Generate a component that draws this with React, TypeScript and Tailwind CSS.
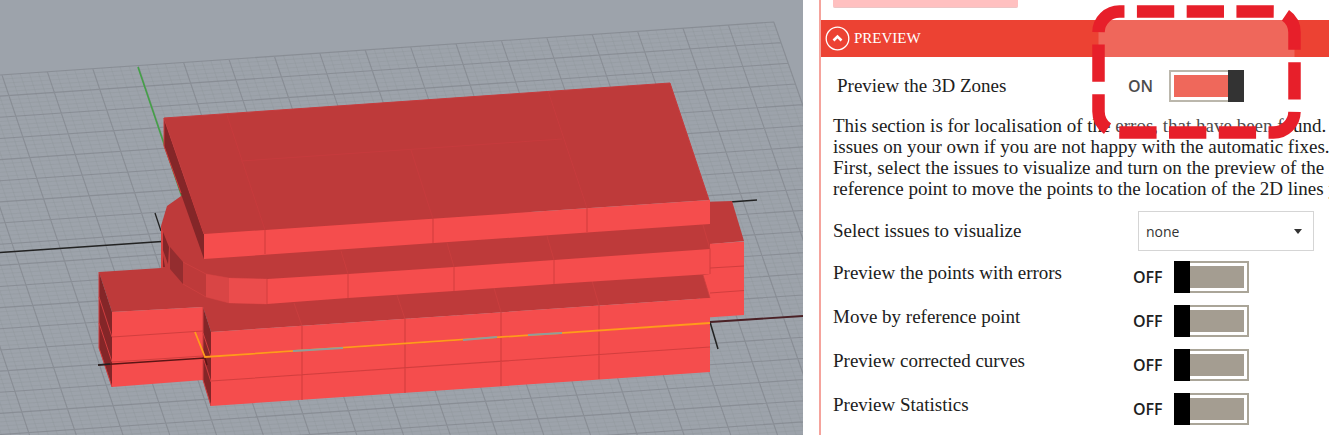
import { useState } from "react";

const ROWS = 22;
const STEPS = 5;

const ISSUES = ["none", "duplicates", "gaps", "overlaps"];

const SWITCHES = [
  { id: "points", label: "Preview the points with errors" },
  { id: "move", label: "Move by reference point" },
  { id: "curves", label: "Preview corrected curves" },
  { id: "statistics", label: "Preview Statistics" },
];

// construction plane, u runs along the back edge and v towards the viewer
function GridLines() {
  const major: string[] = [];
  const minor: string[] = [];

  for (let i = -8 * STEPS; i <= 17 * STEPS; i++) {
    const u = i / STEPS;
    const x1 = 2 + u * 45.4;
    const y1 = 75 - u * 3.12;
    const x2 = 123 + u * 46.75;
    const line = `M${x1} ${y1}L${x2} 435`;
    (i % STEPS === 0 ? major : minor).push(line);
  }

  for (let j = 0; j <= ROWS * STEPS; j++) {
    const y = 75 + (j / STEPS) * 21.15;
    const end = 774 + (j / STEPS) * 7.2;
    const line = `M0 ${y}L${end} ${y - end * 0.0685}`;
    (j % STEPS === 0 ? major : minor).push(line);
  }

  return (
    <g fill="none">
      <path d={minor.join("")} stroke="#8b9097" strokeWidth="0.8" opacity="0.35" />
      <path d={major.join("")} stroke="#80848b" strokeWidth="1.1" opacity="0.7" />
    </g>
  );
}

function Viewport() {
  return (
    <svg
      viewBox="0 0 803 435"
      preserveAspectRatio="xMinYMin slice"
      className="block h-full w-full"
      role="img"
      aria-label="3D zones"
    >
      <rect width="803" height="435" fill="#9da3ab" />
      <GridLines />

      <path d="M138 67L182 197" stroke="#44a047" strokeWidth="1.6" />
      <path d="M0 252.500L162 241.500M155 213L161 231M730 202L757 200" stroke="#222" strokeWidth="1.3" />

      {/* right wing */}
      <path d="M700 202L732 201L744 241L700 245Z" fill="#be3a3a" />
      <path d="M700 244.500L744 241.500V315L700 318Z" fill="#f54d4d" />
      <path d="M710 268L744 266M710 293L744 290.500" stroke="#d23e3e" />

      {/* roofs of the lower floors */}
      <path
        d="M99 272L161 268V226L167 206L184 194L710 222V298L211 332L203 307L112 312Z"
        fill="#be3a3a"
      />
      <path d="M703 275L710 274V298Z" fill="#f54d4d" />
      <path d="M161 226L163 232V268H161Z" fill="#d84040" />
      <path d="M163 232L169 247L168 264L163 250ZM163 256L165 267L163 267Z" fill="#842628" />
      <path d="M170 247L183 262V284L170 269Z" fill="#942d2f" />
      <path d="M183 262L206 274L229 278L267 279M183 284L206 297L229 303L267 304" stroke="#cb3f3f" fill="none" />

      {/* left wing */}
      <path d="M99 272L112 312V387L99 348Z" fill="#842628" />
      <path d="M112 312L203 307V380L112 387Z" fill="#f54d4d" />
      <path d="M99 272V348L112 387M99 297L112 337M99 323L112 362" stroke="#cf3d3f" fill="none" />
      <path d="M112 337L203 331M112 362L203 356" stroke="#d23e3e" />

      {/* front block */}
      <path d="M203 307L211 332V406L203 380Z" fill="#842628" />
      <path d="M203 307V380L211 406M203 333L211 357M203 357L211 382" stroke="#cf3d3f" fill="none" />
      <path d="M211 332L710 298V372L211 406Z" fill="#f54d4d" />
      <path
        d="M211 357L710 323M211 381L710 347M302 326V400M405 319V393M501 312V386M599 305V379"
        stroke="#d23e3e"
        strokeWidth="1.1"
      />
      <path d="M294 303L302 326M397 295L405 319M494 288L501 312M592 281L599 305M703 275L710 298" stroke="#cb3f3f" strokeWidth="0.8" />

      {/* middle floor */}
      <path d="M206 274L229 278V303L206 297Z" fill="#d94545" />
      <path d="M229 278L267 279V304L229 303Z" fill="#eb4c4c" />
      <path d="M267 279L348 274L454 267L554 260L710 249V274L554 284L454 291L348 298L267 304Z" fill="#f54d4d" />
      <path d="M267 279V304M348 274V298M454 267V291M554 260V284M710 249V274" stroke="#d23e3e" />
      <path d="M341 251L348 274M447 243L454 267M547 236L554 260M703 225L710 249" stroke="#cb3f3f" strokeWidth="0.8" />

      {/* top floor */}
      <path d="M164 118L204 234V259L164 146Z" fill="#842628" />
      <path d="M164 146V118L204 234M164 146L181 193" stroke="#cf3d3f" fill="none" />
      <path d="M164 118L670 83L709 200L204 234Z" fill="#be3a3a" />
      <path d="M204 234L710 200V224L204 259Z" fill="#f54d4d" />
      <path d="M265 230V254M433 219V243M587 208V232" stroke="#d23e3e" strokeWidth="1.1" />
      <path
        d="M164 118L670 83L709 200M227 115L265 230M241 161L562 139M411 150L433 219M548 91L587 208"
        stroke="#c63b3d"
        fill="none"
      />

      {/* boundary curves */}
      <path d="M98 365L205 358L207 365" stroke="#5c1515" strokeWidth="1.5" fill="none" />
      <path d="M98 365L110 364M710 322L718 349" stroke="#222" strokeWidth="1.5" />
      <path d="M710 322L803 316" stroke="#4a2025" strokeWidth="1.8" />
      <path d="M195 332L205 357L710 323" stroke="#ff9b1c" strokeWidth="1.8" fill="none" />
      <path d="M293 351L343 348M463 340L497 337M528 335L562 333" stroke="#8f9c9c" strokeWidth="2" />
    </svg>
  );
}

type SwitchProps = {
  id: string;
  checked: boolean;
  onChange: (checked: boolean) => void;
};

function Switch({ id, checked, onChange }: SwitchProps) {
  return (
    <span className="flex items-center gap-[9px]">
      <span className="w-8 font-['Open_Sans','Noto_Sans',sans-serif] text-[16px] leading-6 font-semibold">
        {checked ? "ON" : "OFF"}
      </span>
      <input
        id={id}
        type="checkbox"
        role="switch"
        checked={checked}
        onChange={(e) => onChange(e.target.checked)}
        className="relative h-8 w-[75px] appearance-none border-2 border-[#aaa598] bg-[#a49d91] shadow-[inset_0_0_0_3px_white] before:absolute before:-top-0.5 before:-left-0.5 before:h-8 before:w-4 before:bg-black checked:bg-[#eb4333] checked:before:-right-0.5 checked:before:left-auto"
      />
    </span>
  );
}

function Highlight() {
  return (
    <svg
      viewBox="0 0 209 134"
      className="pointer-events-none absolute top-[5px] left-[289px] h-[134px] w-[209px]"
      aria-hidden="true"
    >
      <rect
        x="6.500"
        y="6.500"
        width="196"
        height="121"
        rx="21"
        pathLength="600"
        fill="#fff"
        fillOpacity="0.2"
        stroke="#e71f2a"
        strokeWidth="12.500"
        strokeDasharray="37.500 12.500"
        strokeDashoffset="32.500"
      />
    </svg>
  );
}

export default function App() {
  const [zones, setZones] = useState(true);
  const [issue, setIssue] = useState("none");
  const [enabled, setEnabled] = useState<Record<string, boolean>>({});

  return (
    <div className="grid h-screen grid-cols-[803fr_526fr] overflow-hidden bg-white font-['Liberation_Serif',serif] text-[19px] text-[#202020]">
      <main className="min-h-0 min-w-0">
        <Viewport />
      </main>

      <aside className="relative min-w-0 overflow-hidden pl-4">
        <div className="h-full border-l-2 border-[#f5a39c]">
          <div className="h-5 pl-3">
            <div className="h-2 w-[185px] rounded-b-xs border-b border-[#ecc5c5] bg-[#ffc0c0]" />
          </div>

          <button className="flex h-[37px] w-full items-center gap-1 bg-[#ec4233] pl-1 text-left text-[15px] text-white">
            <svg width="25" height="25" viewBox="0 0 25 25" fill="none" stroke="currentColor">
              <circle cx="12.500" cy="12.500" r="11.300" strokeWidth="1.300" />
              <path d="M8.500 14.500L12.500 10.500L16.500 14.500" strokeWidth="2.600" />
            </svg>
            PREVIEW
          </button>

          <div className="pl-3">
            <div className="flex h-[58px] items-center pl-1">
              <label htmlFor="zones" className="w-[291px]">
                Preview the 3D Zones
              </label>
              <Switch id="zones" checked={zones} onChange={setZones} />
            </div>

            <p className="leading-[21px] whitespace-nowrap">
              This section is for localisation of the erros, that have been found. T
              <br />
              issues on your own if you are not happy with the automatic fixes.
              <br />
              First, select the issues to visualize and turn on the preview of the p
              <br />
              reference point to move the points to the location of the 2D lines y
            </p>

            <div className="flex items-center pt-3">
              <label htmlFor="issue" className="w-[305px]">
                Select issues to visualize
              </label>
              <div className="relative">
                <select
                  id="issue"
                  value={issue}
                  onChange={(e) => setIssue(e.target.value)}
                  className="h-10 w-44 appearance-none border border-[#d5d5d5] bg-white px-[7px] font-['Open_Sans','Noto_Sans',sans-serif] text-[14px] text-[#333]"
                >
                  {ISSUES.map((name) => (
                    <option key={name}>{name}</option>
                  ))}
                </select>
                <svg
                  viewBox="0 0 8 5"
                  className="pointer-events-none absolute top-[18px] right-3 h-[5px] w-2"
                  aria-hidden="true"
                >
                  <path d="M0 0H8L4 5Z" fill="#333" />
                </svg>
              </div>
            </div>

            <div className="pt-1">
              {SWITCHES.map((s) => (
                <div key={s.id} className="flex h-11 items-center">
                  <label htmlFor={s.id} className="w-[300px] pb-2">
                    {s.label}
                  </label>
                  <Switch
                    id={s.id}
                    checked={!!enabled[s.id]}
                    onChange={(on) => setEnabled({ ...enabled, [s.id]: on })}
                  />
                </div>
              ))}
            </div>
          </div>
        </div>
        <Highlight />
      </aside>
    </div>
  );
}
